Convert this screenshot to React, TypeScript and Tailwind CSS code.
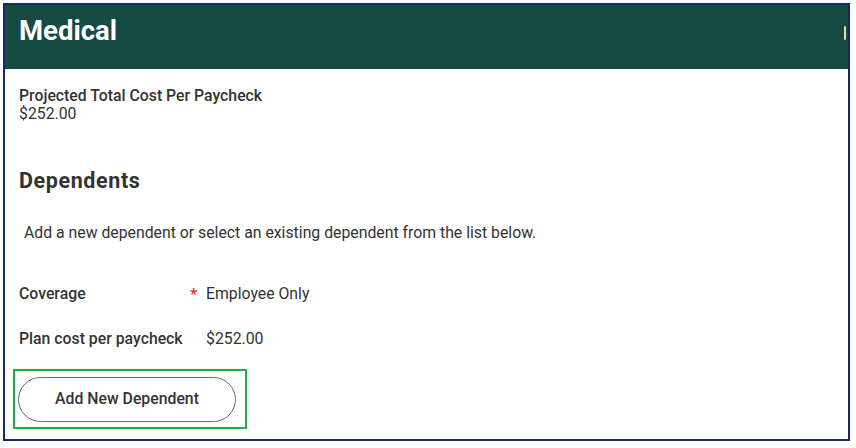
export default function App() {
  return (
    <div className="w-[856px] h-[448px] bg-white pt-[3px] pl-[3px]" style={{ fontFamily: "Roboto, 'Liberation Sans', sans-serif" }}>
      <div className="w-[847px] h-[438px] border-2 border-[#16286a] flex flex-col">
        {/* Header */}
        <div className="h-[64px] bg-[#164b43] flex items-start justify-between pl-[14px] pr-[2px] pt-[12px]">
          <h1 className="text-white font-bold text-[27.5px] leading-none">Medical</h1>
          <span className="mt-[9px] w-[2px] h-[14px] rounded-full bg-[#e8dca0]" />
        </div>

        {/* Body */}
        <div className="flex-1 pl-[14px] text-[#333333]">
          <div className="pt-[18px] text-[15.8px] leading-[18px]">
            <div className="font-medium">Projected Total Cost Per Paycheck</div>
            <div>$252.00</div>
          </div>

          <h2 className="mt-[45px] text-[21.5px] font-bold leading-[26px] tracking-[0.6px]">Dependents</h2>

          <p className="mt-[29px] pl-[5px] text-[15.8px] leading-[20px]">
            Add a new dependent or select an existing dependent from the list below.
          </p>

          <div className="mt-[41px] flex items-center text-[15.8px] leading-[20px]">
            <span className="w-[171px] font-medium">Coverage</span>
            <span className="text-[#e0281e] w-[16px] text-[17px]">*</span>
            <span>Employee Only</span>
          </div>

          <div className="mt-[25px] flex items-center text-[15.8px] leading-[20px]">
            <span className="w-[187px] font-medium">Plan cost per paycheck</span>
            <span>$252.00</span>
          </div>

          <div className="mt-[20px] -ml-[6px] w-[234px] h-[60px] border-2 border-[#1db04a] flex items-center pl-[3px]">
            <button className="w-[218px] h-[45px] rounded-full border-[1.5px] border-[#6b6b6b] bg-white text-[15.8px] font-medium text-[#333333]">
              Add New Dependent
            </button>
          </div>
        </div>
      </div>
    </div>
  );
}
